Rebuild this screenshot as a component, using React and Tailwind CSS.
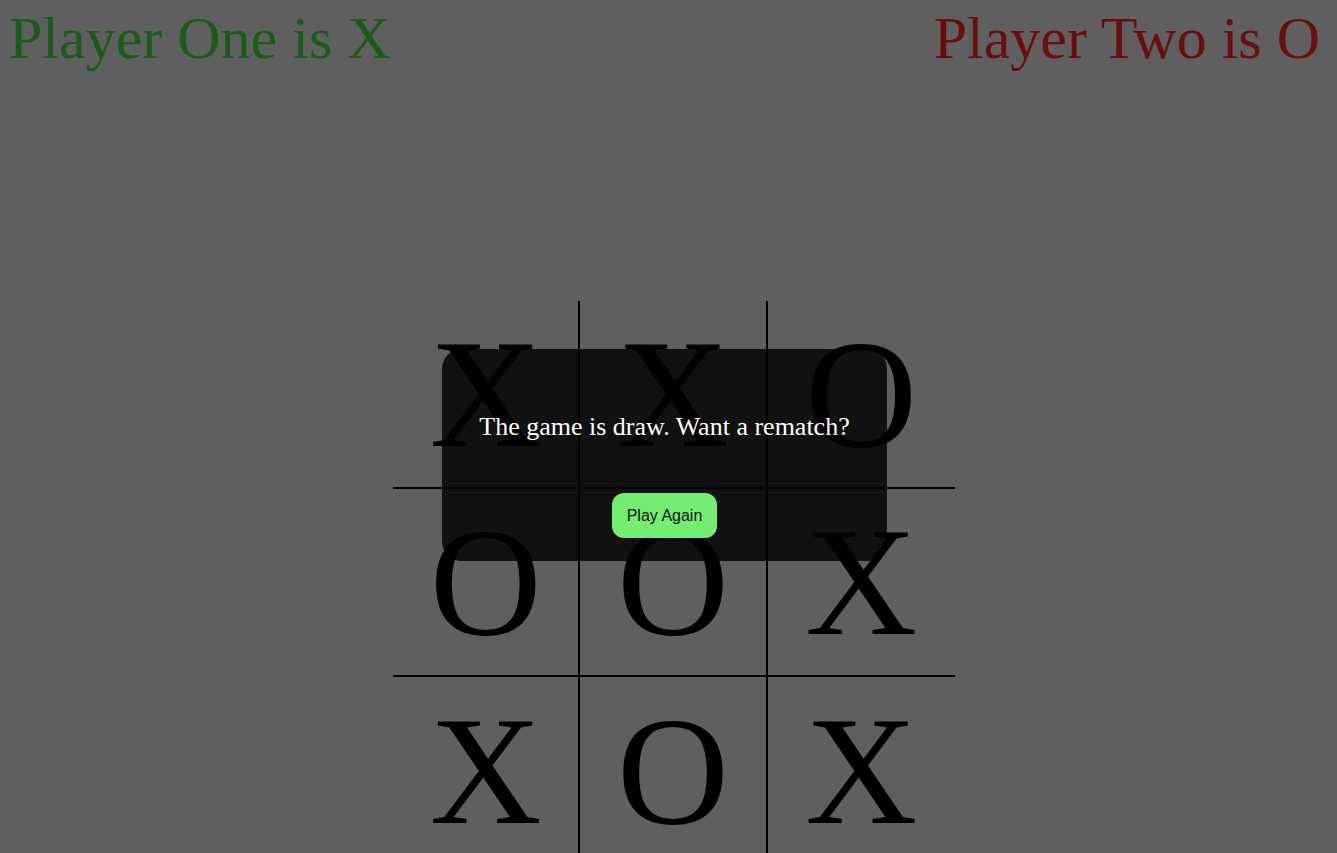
import React from 'react'

const board = ['X', 'X', 'O', 'O', 'O', 'X', 'X', 'O', 'X']

function Cell({ value, index }) {
    const col = index % 3
    const row = Math.floor(index / 3)
    return (
        <div
            className={
                'flex items-center justify-center h-[188px] text-[155px] leading-none border-black ' +
                (col < 2 ? 'border-r-2 ' : '') +
                (row < 2 ? 'border-b-2' : '')
            }
        >
            {value}
        </div>
    )
}

export default function App() {
    return (
        <div className='relative w-full h-screen overflow-hidden bg-[#5f5f5f] font-["Liberation_Serif",serif]'>
            <div className='flex justify-between pl-[9px] pr-[17px] pt-[8px] text-[60px] leading-[60px]'>
                <h1 className='text-[#1b5c1b]'>Player One is X</h1>
                <h1 className='text-[#6b0e0e]'>Player Two is O</h1>
            </div>

            <div className='flex justify-center mt-[233px]'>
                <div className='grid grid-cols-3 w-[562px] ml-[11px] text-black'>
                    {board.map((v, i) => (
                        <Cell key={i} value={v} index={i} />
                    ))}
                </div>
            </div>

            <div className='absolute left-[442px] top-[349px] w-[445px] h-[212px] rounded-[20px] bg-[rgba(0,0,0,0.82)] flex flex-col items-center pt-[63px]'>
                <p className='text-white text-[26px] leading-[30px]'>The game is draw. Want a rematch?</p>
                <button className='mt-[51px] w-[105px] h-[45px] rounded-[12px] bg-[#73ee73] text-[#111] text-[16px] font-["Liberation_Sans",sans-serif]'>
                    Play Again
                </button>
            </div>
        </div>
    )
}
